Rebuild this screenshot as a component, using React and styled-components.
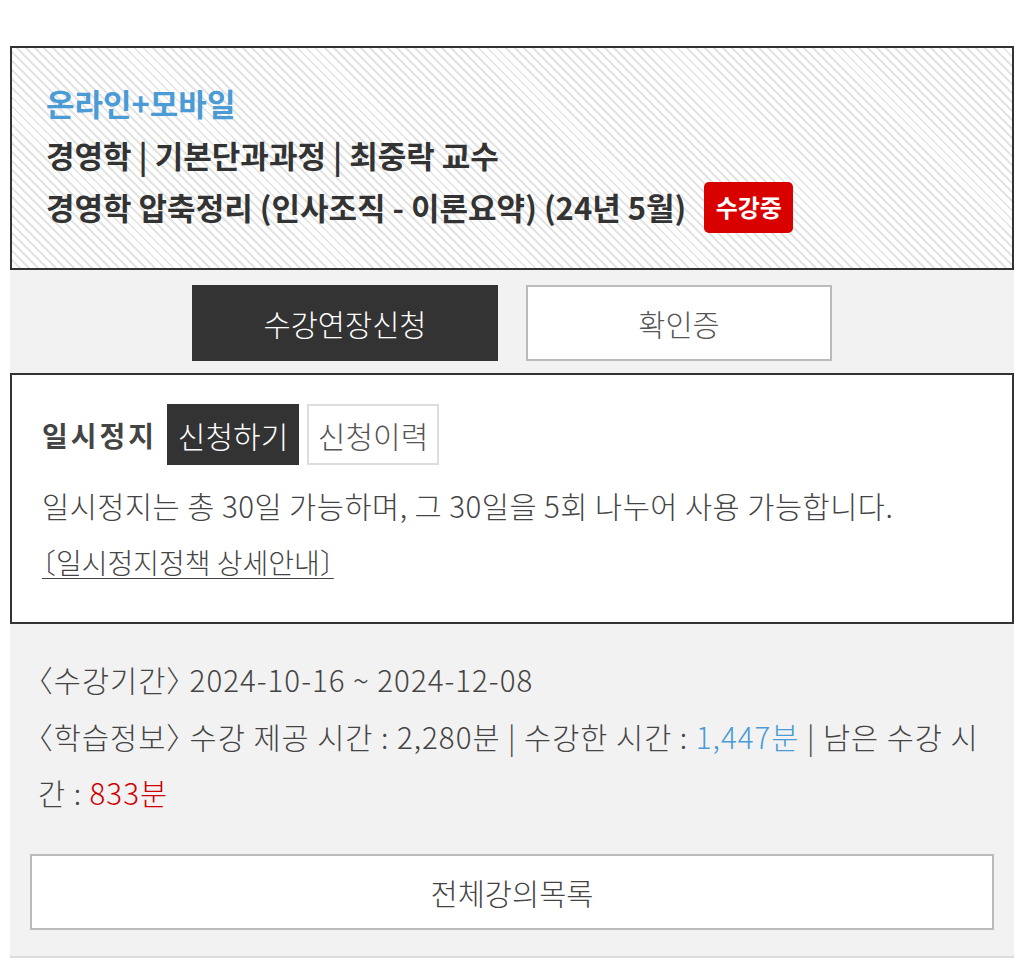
import React from 'react'
import styled, { createGlobalStyle } from 'styled-components'

const GlobalStyle = createGlobalStyle`
  html, body {
    margin: 0;
    padding: 0;
    background: #fff;
  }
  body {
    font-family: "Noto Sans CJK KR", "Noto Sans", sans-serif;
    color: #444;
  }
`

const Page = styled.div`
  padding: 46px 10px 0;
`

const Wrap = styled.div`
  background: #f2f2f2;
  border-bottom: 2px solid #dcdcdc;
`

const CourseCard = styled.section`
  border: 2px solid #333;
  padding: 29px 34px 35px;
  background-color: #fff;
  background-image: repeating-linear-gradient(
    45deg,
    #fff 0,
    #fff 4.4px,
    #e4e4e4 4.4px,
    #e4e4e4 6.4px
  );

  p {
    margin: 0;
    font-size: 31px;
    line-height: 52px;
    font-weight: 700;
    color: #333;
  }

  .type {
    color: #4a9bd6;
  }

  .title {
    display: flex;
    align-items: center;
  }
`

const Badge = styled.span`
  display: inline-flex;
  align-items: center;
  justify-content: center;
  margin-left: 18px;
  width: 89px;
  height: 51px;
  border-radius: 5px;
  background: #d90000;
  color: #fff;
  font-size: 24px;
  font-weight: 700;
`

const ActionRow = styled.div`
  display: flex;
  justify-content: center;
  gap: 28px;
  padding: 15px 0 12px;
`

const ActionButton = styled.button`
  width: 306px;
  height: 76px;
  box-sizing: border-box;
  border: 2px solid ${p => (p.$dark ? '#333' : '#bbb')};
  background: ${p => (p.$dark ? '#333' : '#fff')};
  color: ${p => (p.$dark ? '#fff' : '#555')};
  font-family: inherit;
  font-size: 29.5px;
  font-weight: 300;
  cursor: pointer;
  padding: 0;
`

const PauseCard = styled.section`
  border: 2px solid #333;
  background: #fff;
  padding: 29px 30px 31px;
`

const PauseHead = styled.div`
  display: flex;
  align-items: center;
  gap: 8px;
`

const PauseLabel = styled.strong`
  font-size: 28px;
  font-weight: 700;
  color: #444;
  letter-spacing: 3px;
  margin-right: 2px;
`

const Tab = styled.button`
  width: 132px;
  height: 61px;
  box-sizing: border-box;
  border: 2px solid ${p => (p.$active ? '#333' : '#ddd')};
  background: ${p => (p.$active ? '#333' : '#fff')};
  color: ${p => (p.$active ? '#fff' : '#555')};
  font-family: inherit;
  font-size: 30px;
  font-weight: 300;
  padding: 0;
  cursor: pointer;
`

const PauseText = styled.p`
  margin: 12px 0 0;
  font-size: 29.5px;
  font-weight: 300;
  letter-spacing: 0.5px;
  line-height: 57px;
  color: #444;
`

const LinkLine = styled.div`
  font-size: 28px;
  font-weight: 300;
  line-height: 57px;
`

const PolicyLink = styled.a`
  color: #444;
  text-decoration: underline;
  text-decoration-thickness: 1px;
  text-underline-offset: 4px;
`

// half-width CJK brackets, as the reference draws them
const Bracket = styled.span`
  font-feature-settings: "halt";
`

const Info = styled.div`
  padding: 27px 20px 33px 28px;

  p {
    margin: 0;
    font-size: 29.5px;
    font-weight: 300;
    letter-spacing: 1px;
    line-height: 56.5px;
    color: #444;
    word-break: break-all;
  }

  .used {
    color: #4a9bd6;
  }

  .left {
    color: #cc0000;
  }
`

const ListButton = styled.button`
  display: block;
  width: calc(100% - 40px);
  margin: 0 20px;
  height: 76px;
  box-sizing: border-box;
  border: 2px solid #bbb;
  background: #fff;
  color: #444;
  font-family: inherit;
  font-size: 29.5px;
  font-weight: 300;
  cursor: pointer;
`

const Footer = styled.div`
  padding-bottom: 26px;
`

export default function App() {
  return (
    <>
      <GlobalStyle />
      <Page>
        <Wrap>
          <CourseCard>
            <p className="type">온라인+모바일</p>
            <p>경영학 | 기본단과과정 | 최중락 교수</p>
            <p className="title">
              경영학 압축정리 (인사조직 - 이론요약) (24년 5월)
              <Badge>수강중</Badge>
            </p>
          </CourseCard>

          <ActionRow>
            <ActionButton $dark>수강연장신청</ActionButton>
            <ActionButton>확인증</ActionButton>
          </ActionRow>

          <PauseCard>
            <PauseHead>
              <PauseLabel>일시정지</PauseLabel>
              <Tab $active>신청하기</Tab>
              <Tab>신청이력</Tab>
            </PauseHead>
            <PauseText>일시정지는 총 30일 가능하며, 그 30일을 5회 나누어 사용 가능합니다.</PauseText>
            <LinkLine>
              <PolicyLink href="#">
                <Bracket>〔</Bracket>일시정지정책 상세안내<Bracket>〕</Bracket>
              </PolicyLink>
            </LinkLine>
          </PauseCard>

          <Info>
            <p>
              <Bracket>〈</Bracket>수강기간<Bracket>〉</Bracket> 2024-10-16 ~ 2024-12-08
            </p>
            <p>
              <Bracket>〈</Bracket>학습정보<Bracket>〉</Bracket> 수강 제공 시간 : 2,280분 | 수강한 시간 : <span className="used">1,447분</span> | 남은 수강 시간 : <span className="left">833분</span>
            </p>
          </Info>

          <Footer>
            <ListButton>전체강의목록</ListButton>
          </Footer>
        </Wrap>
      </Page>
    </>
  )
}
